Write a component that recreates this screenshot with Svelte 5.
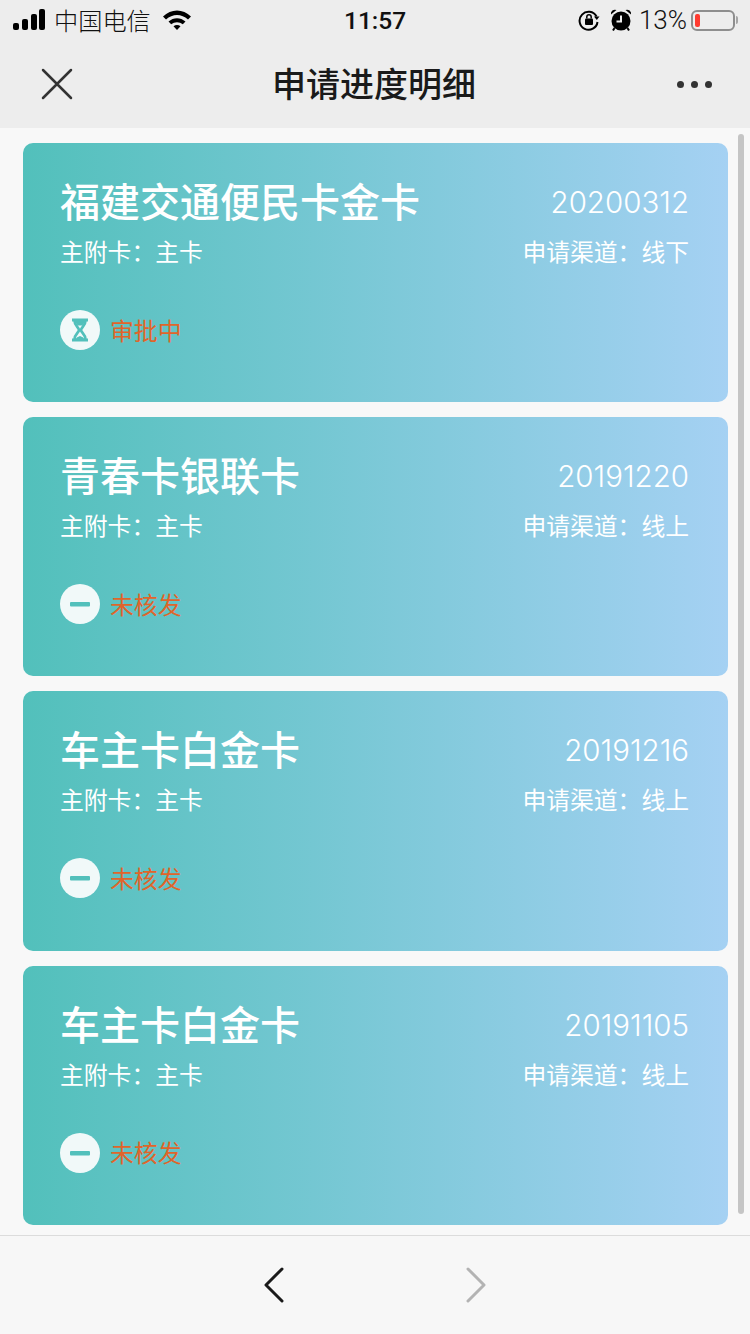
<script>
  const cards = [
    { name: '福建交通便民卡金卡', date: '20200312', channel: '线下', status: '审批中', pending: true },
    { name: '青春卡银联卡', date: '20191220', channel: '线上', status: '未核发', pending: false },
    { name: '车主卡白金卡', date: '20191216', channel: '线上', status: '未核发', pending: false },
    { name: '车主卡白金卡', date: '20191105', channel: '线上', status: '未核发', pending: false },
  ]
</script>

<div class="page">
  <header>
    <div class="status-bar">
      <div class="status-left">
        <svg width="34" height="22" viewBox="0 0 34 22">
          <rect x="1" y="14" width="6" height="7" rx="2" />
          <rect x="10" y="10" width="6" height="11" rx="2" />
          <rect x="19" y="5" width="6" height="16" rx="2" />
          <rect x="27" y="0" width="6" height="21" rx="2" />
        </svg>
        <span class="carrier">中国电信</span>
        <svg class="wifi" width="30" height="22" viewBox="0 0 30 22">
          <path d="M1 7.500C9 -0.500 21 -0.500 29 7.500L26 10.500C19.500 4.500 10.500 4.500 4 10.500Z" />
          <path d="M6.500 12.500C11.500 8 18.500 8 23.500 12.500L20.800 15.300C17.500 12.500 12.500 12.500 9.200 15.300Z" />
          <path d="M11.500 17.200C13.500 15.600 16.500 15.600 18.500 17.200L15 21Z" />
        </svg>
      </div>
      <div class="time">11:57</div>
      <div class="status-right">
        <svg width="22" height="22" viewBox="0 0 22 22">
          <path class="line" d="M18.500 7.500A9 9 0 1 0 19.500 13" />
          <path d="M16 7.500L21.500 7.500L18.800 11Z" />
          <rect x="7" y="9.500" width="8" height="6.500" rx="1" />
          <path class="thin" d="M8.800 9.500V8A2.200 2.200 0 0 1 13.200 8V9.500" />
        </svg>
        <svg class="alarm" width="22" height="24" viewBox="0 0 22 24">
          <circle cx="11" cy="13" r="9.500" />
          <path d="M1 6.500A4 4 0 0 1 6.500 2ZM21 6.500A4 4 0 0 0 15.500 2Z" />
          <path class="hand" d="M11 7.500V13.500H6.500" />
          <path class="leg" d="M4.500 20L3 22.500M17.500 20L19 22.500" />
        </svg>
        <span class="percent">13%</span>
        <div class="battery"><i></i></div>
        <div class="battery-tip"></div>
      </div>
    </div>
    <div class="nav">
      <svg width="32" height="32" viewBox="0 0 32 32">
        <path d="M2 2L30 30M30 2L2 30" />
      </svg>
      <h1>申请进度明细</h1>
      <div class="more"><i></i><i></i><i></i></div>
    </div>
  </header>

  <main>
    {#each cards as card}
      <section class="card">
        <div class="row">
          <h2>{card.name}</h2>
          <span class="date">{card.date}</span>
        </div>
        <div class="row sub">
          <span>主附卡：主卡</span>
          <span>申请渠道：{card.channel}</span>
        </div>
        <div class="state">
          <svg width="40" height="40" viewBox="0 0 40 40">
            <circle cx="20" cy="20" r="20" fill="#f1f9f9" />
            {#if card.pending}
              <path class="glass" d="M12 10H28M12 30H28M14.500 10.500C14.500 16 19 17.500 19 20C19 22.500 14.500 24 14.500 29.500M25.500 10.500C25.500 16 21 17.500 21 20C21 22.500 25.500 24 25.500 29.500" />
              <path class="sand" d="M15.500 11H24.500C24.500 13 23 14.500 22 15.500H18C17 14.500 15.500 13 15.500 11ZM16 29C16.500 27.500 17.500 27 20 26C22.500 27 23.500 27.500 24 29Z" />
            {:else}
              <rect x="10" y="18" width="20" height="4.500" rx="1" fill="#52c0bb" />
            {/if}
          </svg>
          <span>{card.status}</span>
        </div>
      </section>
    {/each}
    <div class="scrollbar"></div>
  </main>

  <footer>
    <svg width="20" height="36" viewBox="0 0 20 36">
      <path d="M18 2L2 18L18 34" />
    </svg>
    <svg class="disabled" width="20" height="36" viewBox="0 0 20 36">
      <path d="M2 2L18 18L2 34" />
    </svg>
  </footer>
</div>

<style>
  :global(body) {
    margin: 0;
    background: #f8f8f8;
  }
  .page {
    width: 750px;
    height: 1334px;
    display: flex;
    flex-direction: column;
    overflow: hidden;
    font-family: "Noto Sans CJK SC", "Noto Sans", sans-serif;
  }
  header {
    height: 128px;
    background: #ededed;
    color: #1a1a1a;
  }
  .status-bar {
    height: 40px;
    position: relative;
    display: flex;
    justify-content: space-between;
    align-items: center;
    padding: 0 12px 0 12px;
    color: #111;
  }
  .status-left,
  .status-right {
    display: flex;
    align-items: center;
  }
  .status-left svg,
  .status-right svg {
    fill: #000;
  }
  .carrier {
    font-size: 24.2px;
    line-height: 40px;
    margin-left: 8px;
    font-weight: 300;
  }
  .wifi {
    margin-left: 11px;
  }
  .time {
    position: absolute;
    left: 344px;
    top: 0;
    font: 500 24.5px/41px Roboto, sans-serif;
  }
  .status-right svg {
    margin-right: 10px;
  }
  .line {
    fill: none;
    stroke: #000;
    stroke-width: 2;
  }
  .thin {
    fill: none;
    stroke: #000;
    stroke-width: 1.5;
  }
  .hand {
    fill: none;
    stroke: #ededed;
    stroke-width: 2;
  }
  .leg {
    fill: none;
    stroke: #000;
    stroke-width: 2;
  }
  .percent {
    font: 300 26px/42px Roboto, sans-serif;
    margin-left: -3px;
    margin-right: 4px;
  }
  .battery {
    width: 44px;
    height: 21px;
    box-sizing: border-box;
    border: 2px solid #8e8e8e;
    border-radius: 6px;
    padding: 2px;
  }
  .battery i {
    display: block;
    width: 5px;
    height: 100%;
    border-radius: 2px;
    background: #ff3b30;
  }
  .battery-tip {
    width: 2px;
    height: 8px;
    margin-left: 1px;
    background: #a5a5a5;
    border-radius: 0 2px 2px 0;
  }
  .nav {
    height: 88px;
    display: flex;
    align-items: center;
    justify-content: space-between;
    padding: 0 38px 0 41px;
    position: relative;
  }
  .nav svg path {
    fill: none;
    stroke: #333;
    stroke-width: 2.500;
    stroke-linecap: round;
  }
  h1 {
    margin: 0;
    font-size: 34px;
    font-weight: 500;
    position: absolute;
    left: 272px;
    top: -1px;
    line-height: 88px;
  }
  .more {
    display: flex;
    gap: 7px;
  }
  .more i {
    width: 7px;
    height: 7px;
    border-radius: 50%;
    background: #333;
  }
  main {
    flex: 1;
    position: relative;
    padding: 15px 22px 0 23px;
    display: flex;
    flex-direction: column;
    gap: 15px;
    background: #f8f8f8;
  }
  .card {
    height: 259.2px;
    box-sizing: border-box;
    padding: 34px 39px 0 37px;
    border-radius: 10px;
    color: #fff;
    background: linear-gradient(90deg, #52c0bb, #a5d1f3);
  }
  .row {
    display: flex;
    justify-content: space-between;
    align-items: center;
  }
  h2 {
    margin: 0;
    font-size: 40px;
    line-height: 46px;
    font-weight: 500;
  }
  .date {
    font: 300 29.500px/46px Inter, sans-serif;
    position: relative;
    top: 2px;
  }
  .sub {
    margin-top: 11px;
    font-size: 23.800px;
    line-height: 34px;
    font-weight: 400;
  }
  .state {
    display: flex;
    align-items: center;
    gap: 10px;
    margin-top: 42px;
    font-size: 23.850px;
    font-weight: 400;
    color: #e0652a;
  }
  .state span {
    padding-bottom: 2px;
  }
  .glass {
    fill: none;
    stroke: #52c0bb;
    stroke-width: 2.800;
  }
  .sand {
    fill: #52c0bb;
  }
  .scrollbar {
    position: absolute;
    left: 738px;
    top: 6px;
    width: 6px;
    height: 1080px;
    border-radius: 3px;
    background: #c5c5c5;
  }
  footer {
    height: 99px;
    box-sizing: border-box;
    border-top: 1px solid #dcdcdc;
    background: #f7f7f7;
    display: flex;
    align-items: center;
    justify-content: center;
    gap: 182px;
  }
  footer path {
    fill: none;
    stroke: #1a1a1a;
    stroke-width: 3;
    stroke-linecap: round;
    stroke-linejoin: round;
  }
  footer .disabled path {
    stroke: #b3b3b3;
  }
</style>
